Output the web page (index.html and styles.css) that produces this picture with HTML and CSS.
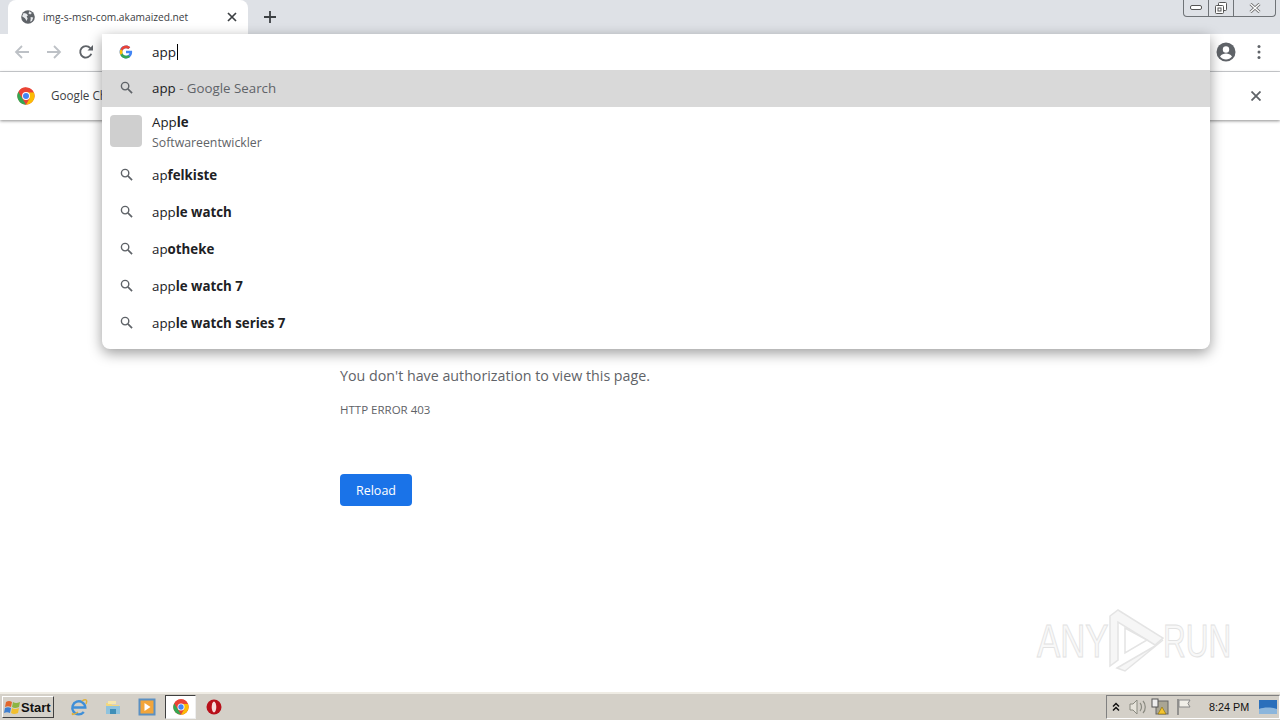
FILE: index.html
```html
<!DOCTYPE html>
<html lang="en">
<head>
<meta charset="utf-8">
<title>img-s-msn-com.akamaized.net</title>
<link rel="stylesheet" href="styles.css">
</head>
<body>
<div class="screen">
  <div class="browser">
    <header class="tabstrip">
      <div class="tab">
        <svg class="tab-globe" viewBox="0 0 16 16" width="14" height="14"><circle cx="8" cy="8" r="7.800" fill="#5f6368"/><path d="M3 3.500l3 .5 2 2-1.500 1.500 1 2-1 3-2-3-3.300-2.500zM9.500 1.500l3 2-2 1.500-2-1zM11 8l3 .500-1.500 4-2 1 .5-3z" fill="#e8eaed"/></svg>
        <span class="tab-title">img-s-msn-com.akamaized.net</span>
        <svg class="tab-close" viewBox="0 0 10 10" width="10" height="10"><path d="M1 1l8 8M9 1l-8 8" stroke="#3c4043" stroke-width="1.700"/></svg>
      </div>
      <svg class="new-tab" viewBox="0 0 12 12" width="12" height="12"><path d="M6 0v12M0 6h12" stroke="#3c4043" stroke-width="1.800"/></svg>
      <div class="win-controls">
        <span class="win-btn win-min"><svg viewBox="0 0 12 6" width="12" height="6"><rect x=".5" y=".5" width="11" height="4" rx="1.500" fill="#fff" stroke="#555"/></svg></span>
        <span class="win-btn win-max"><svg viewBox="0 0 12 12" width="12" height="12"><rect x="3.500" y=".5" width="8" height="8" rx="1" fill="#fff" stroke="#555"/><rect x=".5" y="3.500" width="8" height="8" rx="1" fill="#fff" stroke="#555"/><rect x="3" y="6" width="3" height="3" fill="none" stroke="#555"/></svg></span>
        <span class="win-btn win-close"><svg viewBox="0 0 12 10" width="12" height="10"><path d="M1.500 1L10.500 9M10.500 1L1.500 9" stroke="#666" stroke-width="3"/><path d="M1.500 1L10.500 9M10.500 1L1.500 9" stroke="#fff" stroke-width="1.400"/></svg></span>
      </div>
    </header>

    <nav class="toolbar">
      <svg class="tool-icon" viewBox="0 0 16 16" width="16" height="16"><path d="M15 8H2.500M8 2L2 8l6 6" fill="none" stroke="#bdc1c6" stroke-width="1.800"/></svg>
      <svg class="tool-icon" viewBox="0 0 16 16" width="16" height="16"><path d="M1 8h12.500M8 2l6 6-6 6" fill="none" stroke="#bdc1c6" stroke-width="1.800"/></svg>
      <svg class="tool-icon" viewBox="0 0 16 16" width="16" height="16"><path d="M13.300 9.800A5.700 5.700 0 1 1 12.300 4.200" fill="none" stroke="#5f6368" stroke-width="1.900"/><path d="M9.500 6.500H15V1z" fill="#5f6368"/></svg>
      <div class="toolbar-right">
        <svg viewBox="0 0 20 20" width="20" height="20"><circle cx="10" cy="10" r="9.500" fill="#5f6368"/><circle cx="10" cy="7.500" r="3.200" fill="#fff"/><path d="M4 14.600c1.500-2.300 3.700-3 6-3s4.500.7 6 3c-1.500 1.900-3.700 2.900-6 2.900s-4.500-1-6-2.900z" fill="#fff"/></svg>
        <svg class="kebab" viewBox="0 0 4 16" width="4" height="16"><circle cx="2" cy="2.500" r="1.500" fill="#5f6368"/><circle cx="2" cy="8" r="1.500" fill="#5f6368"/><circle cx="2" cy="13.500" r="1.500" fill="#5f6368"/></svg>
      </div>
    </nav>

    <aside class="infobar">
      <svg class="chrome-logo" viewBox="0 0 48 48" width="18" height="18"><circle cx="24" cy="24" r="23" fill="#ea4335"/><path d="M24 47A23 23 0 0 1 4 12.500L14 30z" fill="#34a853"/><path d="M24 47L34 30 24 14H44.500A23 23 0 0 1 24 47z" fill="#fbbc05"/><path d="M4 12.500A23 23 0 0 1 24 1 23 23 0 0 1 44.500 14H24a10 10 0 0 0-10 16z" fill="#ea4335"/><circle cx="24" cy="24" r="10.500" fill="#fff"/><circle cx="24" cy="24" r="8" fill="#4285f4"/></svg>
      <span class="infobar-text">Google Chrome</span>
      <svg class="infobar-close" viewBox="0 0 10 10" width="10" height="10"><path d="M.5.500l9 9M9.500.500l-9 9" stroke="#5f6368" stroke-width="1.800"/></svg>
    </aside>

    <main class="page">
      <p class="error-desc">You don't have authorization to view this page.</p>
      <p class="error-code">HTTP ERROR 403</p>
      <button class="reload" type="button">Reload</button>
    </main>
  </div>

  <section class="omnibox">
    <div class="omni-input">
      <svg class="g-icon" viewBox="0 0 48 48" width="14" height="14"><path d="M44.500 20H24v8.500h11.800C34.700 33.900 30.100 37 24 37c-7.200 0-13-5.800-13-13s5.800-13 13-13c3.100 0 5.900 1.100 8.100 2.900l6.400-6.400C34.600 4.100 29.600 2 24 2 11.800 2 2 11.800 2 24s9.800 22 22 22c11 0 21-8 21-22 0-1.300-.2-2.700-.5-4z" fill="#4285f4"/><path d="M5.300 14.700l7 5.100C14.100 15.100 18.700 11 24 11c3.100 0 5.900 1.100 8.100 2.900l6.400-6.400C34.600 4.100 29.600 2 24 2 15.600 2 8.300 6.700 5.300 14.700z" fill="#ea4335"/><path d="M24 46c5.500 0 10.500-1.900 14.400-5.400l-6.700-5.500C29.600 36.600 27 37 24 37c-6 0-10.800-3.100-11.700-8.500l-7 5.400C8.300 41.200 15.500 46 24 46z" fill="#34a853"/><path d="M5.300 14.700l7 5.100c-.8 2.600-.8 5.900 0 8.700l-7 5.400C1.600 28 1.600 20 5.300 14.700z" fill="#fbbc05"/></svg>
      <span class="omni-typed">app</span><span class="caret"></span>
    </div>
    <ul class="suggestions">
      <li class="row row-selected">
        <svg class="omni-icon" viewBox="0 0 14 14" width="13" height="13"><circle cx="5.500" cy="5.500" r="4" fill="none" stroke="#5f6368" stroke-width="1.500"/><path d="M8.500 8.500l4.500 4.500" stroke="#5f6368" stroke-width="1.800"/></svg>
        <span class="row-text">app<span class="muted"> - Google Search</span></span>
      </li>
      <li class="row row-entity">
        <span class="entity-thumb"></span>
        <span class="entity-lines"><span class="entity-name">App<b>le</b></span><span class="entity-sub">Softwareentwickler</span></span>
      </li>
      <li class="row">
        <svg class="omni-icon" viewBox="0 0 14 14" width="13" height="13"><circle cx="5.500" cy="5.500" r="4" fill="none" stroke="#5f6368" stroke-width="1.500"/><path d="M8.500 8.500l4.500 4.500" stroke="#5f6368" stroke-width="1.800"/></svg>
        <span class="row-text">ap<b>felkiste</b></span>
      </li>
      <li class="row">
        <svg class="omni-icon" viewBox="0 0 14 14" width="13" height="13"><circle cx="5.500" cy="5.500" r="4" fill="none" stroke="#5f6368" stroke-width="1.500"/><path d="M8.500 8.500l4.500 4.500" stroke="#5f6368" stroke-width="1.800"/></svg>
        <span class="row-text">app<b>le watch</b></span>
      </li>
      <li class="row">
        <svg class="omni-icon" viewBox="0 0 14 14" width="13" height="13"><circle cx="5.500" cy="5.500" r="4" fill="none" stroke="#5f6368" stroke-width="1.500"/><path d="M8.500 8.500l4.500 4.500" stroke="#5f6368" stroke-width="1.800"/></svg>
        <span class="row-text">ap<b>otheke</b></span>
      </li>
      <li class="row">
        <svg class="omni-icon" viewBox="0 0 14 14" width="13" height="13"><circle cx="5.500" cy="5.500" r="4" fill="none" stroke="#5f6368" stroke-width="1.500"/><path d="M8.500 8.500l4.500 4.500" stroke="#5f6368" stroke-width="1.800"/></svg>
        <span class="row-text">app<b>le watch 7</b></span>
      </li>
      <li class="row">
        <svg class="omni-icon" viewBox="0 0 14 14" width="13" height="13"><circle cx="5.500" cy="5.500" r="4" fill="none" stroke="#5f6368" stroke-width="1.500"/><path d="M8.500 8.500l4.500 4.500" stroke="#5f6368" stroke-width="1.800"/></svg>
        <span class="row-text">app<b>le watch series 7</b></span>
      </li>
    </ul>
  </section>

  <div class="watermark">
    <span class="wm-text wm-any">ANY</span>
    <svg class="wm-logo" viewBox="0 0 58 64" width="58" height="64"><path d="M3 8L11 2 56 30 48 37 11 14V52L3 58z" fill="#f6f6f6" stroke="#e4e4e4" stroke-width="1.500"/><path d="M10 60L48 38 56 32 18 63z" fill="#f6f6f6" stroke="#e4e4e4" stroke-width="1.500"/><path d="M18 20L40 32 18 45z" fill="#fff" stroke="#e4e4e4" stroke-width="1.500"/></svg>
    <span class="wm-text wm-run">RUN</span>
  </div>

  <footer class="taskbar">
    <button class="start" type="button">
      <svg viewBox="0 0 18 15" width="18" height="15"><path d="M3 2c2-1.500 4-1.500 6 0L8 7C6 6 4 6 2 7z" fill="#e2672c"/><path d="M10 2c2 1.300 4 1.300 7 0l-1 5c-3 1.300-5 1.300-7 0z" fill="#8cb542"/><path d="M2 8c2-1 4-1 6 0l-1 5c-2-1-4-1-6 0z" fill="#3f7fd0"/><path d="M9 8c2 1.300 4 1.300 7 0l-1 5c-3 1.300-5 1.300-7 0z" fill="#f2bf2e"/></svg>
      <span>Start</span>
    </button>
    <div class="quicklaunch">
      <svg class="ql" viewBox="0 0 18 18" width="18" height="18"><path d="M3 9.500h12.300A6.500 6.500 0 1 0 13.800 14" fill="none" stroke="#3f8fd8" stroke-width="2.400"/><path d="M3 15C1 17 4 17 8 14M12 3c3-2 6-2 4 3" fill="none" stroke="#e0b13c" stroke-width="1.500"/></svg>
      <svg class="ql" viewBox="0 0 18 18" width="18" height="18"><path d="M2 5h5l1 2h7v9H3z" fill="#f3d77b"/><rect x="2" y="8" width="14" height="8" fill="#8fc3de"/><rect x="6" y="11" width="6" height="5" fill="#3f8fb8"/><rect x="4" y="3" width="8" height="3" fill="#f6e7ae"/></svg>
      <svg class="ql" viewBox="0 0 18 18" width="18" height="18"><rect x="1.500" y="1.500" width="15" height="15" fill="#f2a53a" stroke="#5b90c2" stroke-width="2"/><path d="M6.500 5l6 4-6 4z" fill="#fff"/></svg>
      <span class="ql-active"><svg viewBox="0 0 48 48" width="16" height="16"><circle cx="24" cy="24" r="23" fill="#ea4335"/><path d="M24 47A23 23 0 0 1 4 12.500L14 30z" fill="#34a853"/><path d="M24 47L34 30 24 14H44.500A23 23 0 0 1 24 47z" fill="#fbbc05"/><path d="M4 12.500A23 23 0 0 1 24 1 23 23 0 0 1 44.500 14H24a10 10 0 0 0-10 16z" fill="#ea4335"/><circle cx="24" cy="24" r="10.500" fill="#fff"/><circle cx="24" cy="24" r="8" fill="#4285f4"/></svg></span>
      <svg class="ql" viewBox="0 0 16 16" width="16" height="16"><circle cx="8" cy="8" r="7.500" fill="#b8101a"/><ellipse cx="8" cy="8" rx="2.300" ry="5.400" fill="#f7dcdc"/></svg>
    </div>
    <div class="tray">
      <svg viewBox="0 0 8 10" width="8" height="10"><path d="M1 4.500l3-3 3 3M1 8.500l3-3 3 3" fill="none" stroke="#111" stroke-width="1.500"/></svg>
      <svg class="tray-sound" viewBox="0 0 18 16" width="18" height="16"><path d="M1 5h3l4-4v14l-4-4H1z" fill="#e6e3da" stroke="#8a8a80"/><path d="M11 4c2 2 2 6 0 8M14 2c3 3 3 9 0 12" fill="none" stroke="#8a8a80" stroke-width="1.200"/></svg>
      <svg class="tray-net" viewBox="0 0 18 18" width="18" height="18"><rect x="5" y="3" width="12" height="13" fill="#a9a594" stroke="#666"/><rect x="1" y="1" width="6" height="8" fill="#eee" stroke="#555"/><path d="M11 9l4 7H7z" fill="#f4c430" stroke="#8a6d00" stroke-width=".6"/></svg>
      <svg class="tray-flag" viewBox="0 0 16 18" width="16" height="18"><path d="M2 1v16" stroke="#777" stroke-width="1.400"/><path d="M3 2h11l-2 3.500 2 3.500H3z" fill="#f1efe8" stroke="#888"/></svg>
      <span class="clock">8:24 PM</span>
      <svg class="show-desktop" viewBox="0 0 18 14" width="18" height="14"><rect width="18" height="14" fill="#2a6fbb"/><path d="M0 9c5-2 12-2 18 0v5H0z" fill="#8cb6dc"/></svg>
    </div>
  </footer>
</div>
</body>
</html>
```
FILE: styles.css
```css
* { box-sizing: border-box; }
html, body { margin: 0; padding: 0; }
body { width: 1280px; height: 720px; overflow: hidden; font-family: "Open Sans", "Noto Sans", sans-serif; background: #fff; }
.screen { position: relative; width: 1280px; height: 720px; display: flex; flex-direction: column; }
.browser { flex: 1; display: flex; flex-direction: column; min-height: 0; }

.tabstrip { height: 34px; background: #dee1e6; display: flex; align-items: center; padding-left: 8px; position: relative; flex: none; }
.tab { width: 240px; height: 34px; background: #fff; border-radius: 8px 8px 0 0; display: flex; align-items: center; padding: 0 11px 0 13px; }
.tab-globe { flex: none; margin-right: 8px; }
.tab-title { flex: 1; font-size: 10.200px; color: #3c4043; white-space: nowrap; }
.tab-close { flex: none; }
.new-tab { margin-left: 16px; }
.win-controls { position: absolute; top: 0; right: 4px; width: 93px; height: 17px; display: flex; border: 1px solid #6f7377; border-top: 0; border-radius: 0 0 4px 4px; background: #dee1e6; }
.win-btn { display: flex; align-items: center; justify-content: center; border-right: 1px solid #6f7377; height: 16px; }
.win-min { width: 25px; }
.win-max { width: 25px; }
.win-close { flex: 1; border-right: 0; }

.toolbar { height: 38px; flex: none; background: #fff; border-bottom: 1px solid #d0d2d5; display: flex; align-items: center; padding: 0 19px 1px 14px; gap: 16px; }
.toolbar-right { margin-left: auto; display: flex; align-items: center; gap: 21px; }

.infobar { height: 48px; flex: none; background: #fff; display: flex; align-items: center; padding: 0 19px 0 17px; box-shadow: 0 1px 3px rgba(0,0,0,.45); position: relative; }
.infobar-text { font-size: 11.700px; color: #3c4043; margin: 0 0 2px 16px; }
.infobar-close { margin-left: auto; }

.page { flex: 1; padding: 246px 0 0 340px; background: #fff; }
.error-desc { margin: 0; font-size: 14.250px; line-height: 20px; color: #5f6368; }
.error-code { margin: 16px 0 0; font-size: 11.500px; line-height: 16px; color: #5f6368; }
.reload { margin-top: 56px; width: 72px; height: 32px; display: block; border: 0; border-radius: 4px; background: #1a73e8; color: #fff; font: 12.500px "Open Sans", sans-serif; }

.omnibox { position: absolute; left: 102px; top: 34px; width: 1108px; height: 315px; background: #fff; border-radius: 0 0 8px 8px; box-shadow: 0 4px 14px rgba(0,0,0,.4); overflow: hidden; }
.omni-input { height: 36px; display: flex; align-items: center; padding: 0 0 1px 17px; }
.g-icon { flex: none; }
.omni-icon { flex: none; }
.omni-typed { margin-left: 19px; font-size: 13.500px; color: #202124; }
.caret { width: 1px; height: 16px; background: #000; margin-left: 1px; }
.suggestions { list-style: none; margin: 0; padding: 0; }
.row { height: 37px; display: flex; align-items: center; padding: 0 0 2px 18px; }
.row-selected { background: #d9d9d9; }
.row-text { margin-left: 19px; font-size: 13.300px; color: #202124; white-space: nowrap; }
.row-text b, .entity-name b { font-weight: 700; }
.muted { color: #5f6368; }
.row-entity { height: 50px; padding: 0 0 2px 8px; }
.entity-thumb { width: 32px; height: 32px; border-radius: 4px; background: #cfcfcf; flex: none; }
.entity-lines { margin: 2px 0 0 10px; display: flex; flex-direction: column; }
.entity-name { font-size: 13.300px; line-height: 20px; color: #202124; }
.entity-sub { font-size: 12.300px; line-height: 21px; color: #5f6368; }

.watermark { position: absolute; left: 1037px; top: 608px; display: flex; align-items: center; gap: 4px; }
.wm-text { width: 66px; font: 400 47px "Liberation Sans", sans-serif; color: #f8f8f8; -webkit-text-stroke: 1px #e2e2e2; transform-origin: left center; white-space: nowrap; }
.wm-any { transform: scaleX(.74); }
.wm-run { transform: scaleX(.67); margin-left: -2px; }
.wm-logo { margin-right: -4px; }

.taskbar { height: 28px; flex: none; background: #d4d0c8; border-top: 2px solid #efece4; display: flex; align-items: center; }
.start { margin-left: 2px; width: 52px; height: 22px; display: flex; align-items: center; padding: 0; background: #d4d0c8; border: 1px solid; border-color: #fff #404040 #404040 #fff; font: 700 13px "Liberation Sans", sans-serif; color: #111; }
.quicklaunch { display: flex; align-items: center; margin-left: 16px; gap: 16px; }
.ql-active { margin: 0 -6px 0 -7px; width: 31px; height: 24px; background: #fff; border: 1px solid; border-color: #404040 #eee #eee #404040; display: flex; align-items: center; justify-content: center; }
.tray { margin-left: auto; height: 24px; width: 174px; display: flex; align-items: center; padding-left: 5px; border: 1px solid; border-color: #808080 #fff #fff #808080; }
.tray-sound { margin-left: 9px; }
.tray-net { margin-left: 4px; }
.tray-flag { margin-left: 7px; }
.clock { margin-left: 17px; font: 10.800px "Liberation Sans", sans-serif; color: #111; white-space: nowrap; }
.show-desktop { margin-left: 10px; }
```
